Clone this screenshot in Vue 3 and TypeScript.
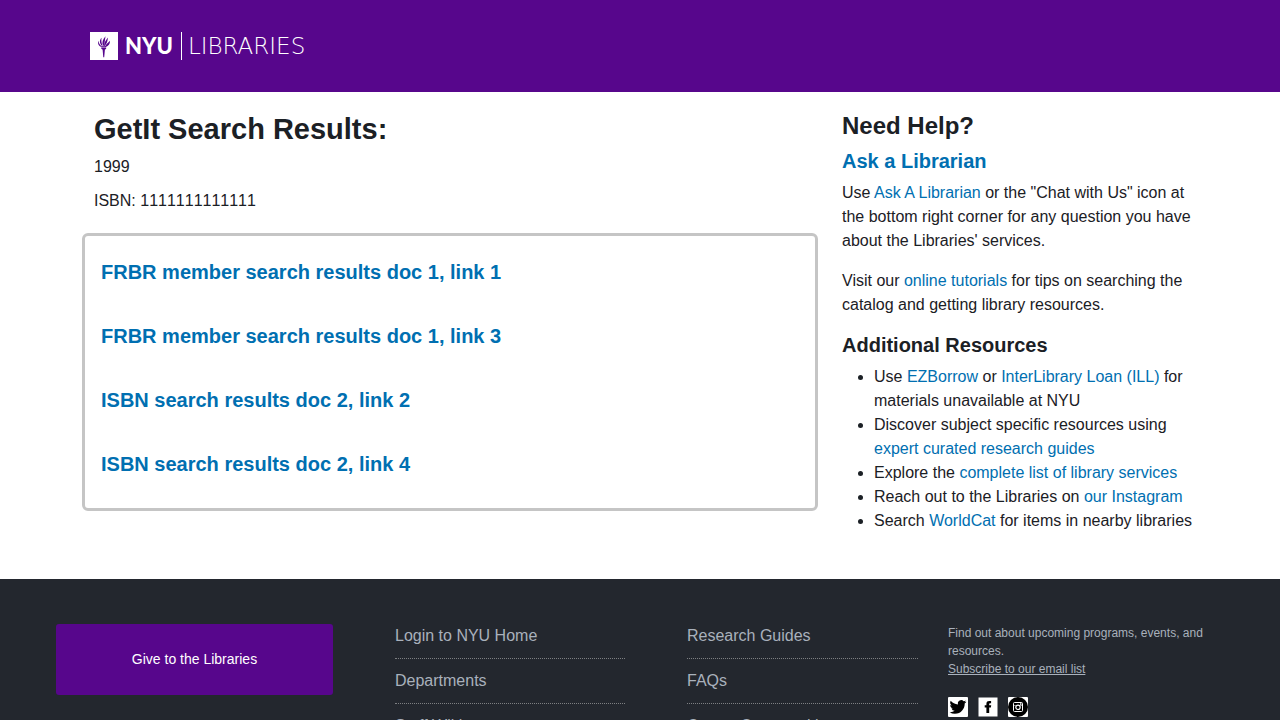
<script setup lang="ts">
interface Item {
  label: string
  href: string
}

const results: Item[] = [
  { label: 'FRBR member search results doc 1, link 1', href: '#result-1' },
  { label: 'FRBR member search results doc 1, link 3', href: '#result-3' },
  { label: 'ISBN search results doc 2, link 2', href: '#result-2' },
  { label: 'ISBN search results doc 2, link 4', href: '#result-4' },
]

const footerLists: Item[][] = [
  [
    { label: 'Login to NYU Home', href: '#home' },
    { label: 'Departments', href: '#departments' },
    { label: 'Staff Wiki', href: '#wiki' },
  ],
  [
    { label: 'Research Guides', href: '#guides' },
    { label: 'FAQs', href: '#faqs' },
    { label: 'Career Opportunities', href: '#careers' },
  ],
]
</script>

<template>
  <div class="page">
    <header class="banner">
      <a class="logo" href="#top" aria-label="NYU Libraries">
        <svg class="torch" viewBox="0 0 28 28" aria-hidden="true">
          <rect width="28" height="28" fill="#fff" />
          <g fill="#57068c">
            <path d="M11.200 15.400h5v1.200l-.9 1h-.4l-.7 7.600h-.9l-.7-7.600h-.4l-1-1z" />
            <path d="M11.300 15C8.600 13.900 7.400 11.500 8.500 8.700c.2 2.300 1.100 3.900 2.900 5.200z" />
            <path d="M11.900 13.800C9.800 11.400 8.900 8.700 11.600 5.700c-.5 2.700-.2 4.900 1 8.500z" />
            <path d="M13 13.800c-1.300-3.400-.4-6 2.500-9.600-.6 3.500-.5 6.200-1.900 9.700z" />
            <path d="M14 13.800c.2-2.800 1.300-5.200 4-8.200-.5 3.400-.8 5.500-3.200 8.400z" />
            <path d="M15 14.400c1.300-2.400 2.900-3.500 5-5.700.1 3.200-1.500 5.300-4.200 6.300z" />
            <path d="M11.200 14.200h4.900v.9h-4.900z" />
          </g>
        </svg>
        <span class="nyu">NYU</span>
        <span class="rule"></span>
        <span class="libraries">LIBRARIES</span>
      </a>
    </header>

    <main class="container">
      <section class="main-col">
        <div class="citation">
          <h1>GetIt Search Results:</h1>
          <p>1999</p>
          <p class="isbn">ISBN: 1111111111111</p>
        </div>
        <ul class="results">
          <li v-for="item in results" :key="item.href">
            <a :href="item.href">{{ item.label }}</a>
          </li>
        </ul>
      </section>

      <aside class="help">
        <h2>Need Help?</h2>
        <h3><a href="#ask">Ask a Librarian</a></h3>
        <p>
          Use <a href="#ask">Ask A Librarian</a> or the "Chat with Us" icon at the bottom right corner for
          any question you have about the Libraries' services.
        </p>
        <p>
          Visit our <a href="#tutorials">online tutorials</a> for tips on searching the catalog and getting
          library resources.
        </p>
        <h3>Additional Resources</h3>
        <ul>
          <li>
            Use <a href="#ezborrow">EZBorrow</a> or <a href="#ill">InterLibrary Loan (ILL)</a> for materials
            unavailable at NYU
          </li>
          <li>Discover subject specific resources using <a href="#guides">expert curated research guides</a></li>
          <li>Explore the <a href="#services">complete list of library services</a></li>
          <li>Reach out to the Libraries on <a href="#instagram">our Instagram</a></li>
          <li>Search <a href="#worldcat">WorldCat</a> for items in nearby libraries</li>
        </ul>
      </aside>
    </main>

    <footer class="footer">
      <div>
        <a class="give" href="#give">Give to the Libraries</a>
      </div>
      <ul v-for="(list, index) in footerLists" :key="index" class="footer-list">
        <li v-for="item in list" :key="item.href">
          <a :href="item.href">{{ item.label }}</a>
        </li>
      </ul>
      <div class="news">
        <p>Find out about upcoming programs, events, and resources.</p>
        <a class="subscribe" href="#subscribe">Subscribe to our email list</a>
        <div class="social">
          <a href="#twitter" aria-label="Twitter">
            <svg viewBox="0 0 20 20">
              <rect width="20" height="20" rx="1" fill="#fff" />
              <path transform="translate(1.600 1.600) scale(.7)" d="M23.950 4.570a10 10 0 0 1-2.820.770 4.960 4.960 0 0 0 2.160-2.720c-.950.550-2 .950-3.130 1.180a4.920 4.920 0 0 0-8.380 4.480C7.690 8.100 4.070 6.130 1.640 3.160a4.920 4.920 0 0 0 1.520 6.570 4.900 4.900 0 0 1-2.230-.610v.060a4.920 4.920 0 0 0 3.950 4.830 5 5 0 0 1-2.210.080 4.940 4.940 0 0 0 4.600 3.420A9.870 9.870 0 0 1 0 19.540a14 14 0 0 0 7.550 2.210c9.050 0 14-7.500 14-13.980 0-.210 0-.420-.020-.630a9.940 9.940 0 0 0 2.420-2.570z" />
            </svg>
          </a>
          <a href="#facebook" aria-label="Facebook">
            <svg viewBox="0 0 20 20">
              <rect x=".5" y=".5" width="19" height="19" fill="#fff" />
              <path d="M8.400 16v-5.400H6.700V8.200h1.700V6.800C8.400 4.700 9.600 4 11.200 4h1.900v2.300h-1.100c-.6 0-.8.300-.8.900v1h2l-.3 2.400h-1.700V16z" />
            </svg>
          </a>
          <a href="#instagram" aria-label="Instagram">
            <svg viewBox="0 0 20 20">
              <rect width="20" height="20" rx="1" fill="#fff" />
              <circle cx="10" cy="10" r="10" />
              <rect x="5.500" y="5.500" width="9" height="9" rx="1" fill="none" stroke="#fff" stroke-width="1" />
              <circle cx="10" cy="10.300" r="2.200" fill="none" stroke="#fff" stroke-width="1.200" />
              <path d="M5.500 8.500h2.500M12 8.500h2.500" stroke="#fff" stroke-width=".5" />
              <rect x="12" y="6.300" width="1.500" height="1.500" fill="#fff" />
            </svg>
          </a>
        </div>
      </div>
    </footer>
  </div>
</template>

<style>
body {
  margin: 0;
  background: #fff;
}
</style>

<style scoped>
* {
  box-sizing: border-box;
}
.page {
  font: 16px/24px "Liberation Sans", Arial, sans-serif;
  color: #1b2025;
}
a {
  color: #006fb1;
  text-decoration: none;
}
h1,
h2,
h3,
p,
ul {
  margin: 0;
}
.banner {
  background: #57068c;
  padding: 32px 90px;
}
.logo {
  display: flex;
  align-items: center;
  height: 28px;
  color: #fff;
  white-space: nowrap;
}
.torch {
  width: 28px;
  height: 28px;
}
.nyu {
  margin-left: 7px;
  font: 900 22px/28px Lato, sans-serif;
}
.rule {
  width: 1px;
  height: 28px;
  margin: 0 6px 0 8px;
  background: #fff;
}
.libraries {
  font: 200 23px/28px "DejaVu Sans Light", "DejaVu Sans ExtraLight", Inter, sans-serif;
}
.container {
  display: grid;
  grid-template-columns: 2fr 1fr;
  max-width: 1140px;
  margin: 0 auto;
  padding: 20px 0 46px;
}
.main-col,
.help {
  padding: 0 12px;
}
.citation {
  padding: 0 12px;
}
h1 {
  margin-bottom: 8px;
  font-size: 29px;
  line-height: 35px;
}
.citation p {
  margin-bottom: 10px;
}
.isbn {
  font-kerning: none;
}
.results {
  margin-top: 20px;
  padding: 4px 16px 12px;
  border: 3px solid #c5c5c5;
  border-radius: 6px;
  list-style: none;
}
.results li {
  padding: 20px 0;
  font-size: 20px;
  font-weight: 700;
}
h2 {
  margin-bottom: 9px;
  font-size: 24px;
  line-height: 28px;
}
h3 {
  margin-bottom: 8px;
  font-size: 20px;
  line-height: 24px;
}
.help p {
  margin-bottom: 16px;
}
.help ul {
  padding-left: 32px;
}
.footer {
  display: grid;
  grid-template-columns: 277fr 262fr 263fr 276fr;
  column-gap: 30px;
  padding: 45px 56px;
  background: #23272e;
  color: #a9b1bc;
}
.footer a {
  color: inherit;
}
.footer .give {
  display: block;
  padding: 24px;
  border-radius: 3px;
  background: #57068c;
  color: #fff;
  font-size: 14px;
  line-height: 23px;
  text-align: center;
}
.footer-list {
  padding-left: 32px;
  list-style: none;
}
.footer-list li {
  padding: 10px 0;
  border-bottom: 1px dotted #7d7f82;
}
.footer-list li:first-child {
  padding-top: 0;
}
.news {
  font-size: 12px;
  line-height: 18px;
}
.footer .subscribe {
  display: block;
  text-decoration: underline;
}
.social {
  display: flex;
  gap: 10px;
  margin-top: 19px;
}
.social svg {
  display: block;
  width: 20px;
  height: 20px;
}
</style>
